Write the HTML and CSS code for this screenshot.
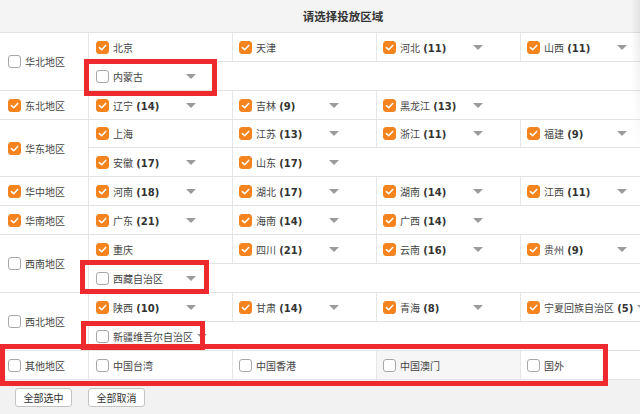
FILE: index.html
```html
<!DOCTYPE html>
<html lang="zh-CN">
<head>
<meta charset="utf-8">
<title>请选择投放区域</title>
<link rel="stylesheet" href="styles.css">
</head>
<body>
<div class="page">
  <div class="header">请选择投放区域</div>
  <div class="table">
    <div class="group">
      <div class="region"><span class="cb"></span>华北地区</div>
      <div class="subs">
        <div class="subrow">
          <div class="cell"><span class="cb on"><svg viewBox="0 0 11 11"><path d="M2.4 5.6 L4.7 7.8 L8.7 3.4"/></svg></span><span class="lbl">北京</span></div>
          <div class="cell"><span class="cb on"><svg viewBox="0 0 11 11"><path d="M2.4 5.6 L4.7 7.8 L8.7 3.4"/></svg></span><span class="lbl">天津</span></div>
          <div class="cell"><span class="cb on"><svg viewBox="0 0 11 11"><path d="M2.4 5.6 L4.7 7.8 L8.7 3.4"/></svg></span><span class="lbl">河北 <b>(11)</b></span><span class="dd"></span></div>
          <div class="cell"><span class="cb on"><svg viewBox="0 0 11 11"><path d="M2.4 5.6 L4.7 7.8 L8.7 3.4"/></svg></span><span class="lbl">山西 <b>(11)</b></span><span class="dd"></span></div>
        </div>
        <div class="subrow">
          <div class="cell"><span class="cb"></span><span class="lbl">内蒙古</span><span class="dd"></span></div>
        </div>
      </div>
    </div>

    <div class="group">
      <div class="region"><span class="cb on"><svg viewBox="0 0 11 11"><path d="M2.4 5.6 L4.7 7.8 L8.7 3.4"/></svg></span>东北地区</div>
      <div class="subs">
        <div class="subrow">
          <div class="cell"><span class="cb on"><svg viewBox="0 0 11 11"><path d="M2.4 5.6 L4.7 7.8 L8.7 3.4"/></svg></span><span class="lbl">辽宁 <b>(14)</b></span><span class="dd"></span></div>
          <div class="cell"><span class="cb on"><svg viewBox="0 0 11 11"><path d="M2.4 5.6 L4.7 7.8 L8.7 3.4"/></svg></span><span class="lbl">吉林 <b>(9)</b></span><span class="dd"></span></div>
          <div class="cell"><span class="cb on"><svg viewBox="0 0 11 11"><path d="M2.4 5.6 L4.7 7.8 L8.7 3.4"/></svg></span><span class="lbl">黑龙江 <b>(13)</b></span><span class="dd"></span></div>
        </div>
      </div>
    </div>

    <div class="group">
      <div class="region"><span class="cb on"><svg viewBox="0 0 11 11"><path d="M2.4 5.6 L4.7 7.8 L8.7 3.4"/></svg></span>华东地区</div>
      <div class="subs">
        <div class="subrow short">
          <div class="cell"><span class="cb on"><svg viewBox="0 0 11 11"><path d="M2.4 5.6 L4.7 7.8 L8.7 3.4"/></svg></span><span class="lbl">上海</span></div>
          <div class="cell"><span class="cb on"><svg viewBox="0 0 11 11"><path d="M2.4 5.6 L4.7 7.8 L8.7 3.4"/></svg></span><span class="lbl">江苏 <b>(13)</b></span><span class="dd"></span></div>
          <div class="cell"><span class="cb on"><svg viewBox="0 0 11 11"><path d="M2.4 5.6 L4.7 7.8 L8.7 3.4"/></svg></span><span class="lbl">浙江 <b>(11)</b></span><span class="dd"></span></div>
          <div class="cell"><span class="cb on"><svg viewBox="0 0 11 11"><path d="M2.4 5.6 L4.7 7.8 L8.7 3.4"/></svg></span><span class="lbl">福建 <b>(9)</b></span><span class="dd"></span></div>
        </div>
        <div class="subrow">
          <div class="cell"><span class="cb on"><svg viewBox="0 0 11 11"><path d="M2.4 5.6 L4.7 7.8 L8.7 3.4"/></svg></span><span class="lbl">安徽 <b>(17)</b></span><span class="dd"></span></div>
          <div class="cell"><span class="cb on"><svg viewBox="0 0 11 11"><path d="M2.4 5.6 L4.7 7.8 L8.7 3.4"/></svg></span><span class="lbl">山东 <b>(17)</b></span><span class="dd"></span></div>
        </div>
      </div>
    </div>

    <div class="group">
      <div class="region"><span class="cb on"><svg viewBox="0 0 11 11"><path d="M2.4 5.6 L4.7 7.8 L8.7 3.4"/></svg></span>华中地区</div>
      <div class="subs">
        <div class="subrow">
          <div class="cell"><span class="cb on"><svg viewBox="0 0 11 11"><path d="M2.4 5.6 L4.7 7.8 L8.7 3.4"/></svg></span><span class="lbl">河南 <b>(18)</b></span><span class="dd"></span></div>
          <div class="cell"><span class="cb on"><svg viewBox="0 0 11 11"><path d="M2.4 5.6 L4.7 7.8 L8.7 3.4"/></svg></span><span class="lbl">湖北 <b>(17)</b></span><span class="dd"></span></div>
          <div class="cell"><span class="cb on"><svg viewBox="0 0 11 11"><path d="M2.4 5.6 L4.7 7.8 L8.7 3.4"/></svg></span><span class="lbl">湖南 <b>(14)</b></span><span class="dd"></span></div>
          <div class="cell"><span class="cb on"><svg viewBox="0 0 11 11"><path d="M2.4 5.6 L4.7 7.8 L8.7 3.4"/></svg></span><span class="lbl">江西 <b>(11)</b></span><span class="dd"></span></div>
        </div>
      </div>
    </div>

    <div class="group">
      <div class="region"><span class="cb on"><svg viewBox="0 0 11 11"><path d="M2.4 5.6 L4.7 7.8 L8.7 3.4"/></svg></span>华南地区</div>
      <div class="subs">
        <div class="subrow">
          <div class="cell"><span class="cb on"><svg viewBox="0 0 11 11"><path d="M2.4 5.6 L4.7 7.8 L8.7 3.4"/></svg></span><span class="lbl">广东 <b>(21)</b></span><span class="dd"></span></div>
          <div class="cell"><span class="cb on"><svg viewBox="0 0 11 11"><path d="M2.4 5.6 L4.7 7.8 L8.7 3.4"/></svg></span><span class="lbl">海南 <b>(14)</b></span><span class="dd"></span></div>
          <div class="cell"><span class="cb on"><svg viewBox="0 0 11 11"><path d="M2.4 5.6 L4.7 7.8 L8.7 3.4"/></svg></span><span class="lbl">广西 <b>(14)</b></span><span class="dd"></span></div>
        </div>
      </div>
    </div>

    <div class="group">
      <div class="region"><span class="cb"></span>西南地区</div>
      <div class="subs">
        <div class="subrow">
          <div class="cell"><span class="cb on"><svg viewBox="0 0 11 11"><path d="M2.4 5.6 L4.7 7.8 L8.7 3.4"/></svg></span><span class="lbl">重庆</span></div>
          <div class="cell"><span class="cb on"><svg viewBox="0 0 11 11"><path d="M2.4 5.6 L4.7 7.8 L8.7 3.4"/></svg></span><span class="lbl">四川 <b>(21)</b></span><span class="dd"></span></div>
          <div class="cell"><span class="cb on"><svg viewBox="0 0 11 11"><path d="M2.4 5.6 L4.7 7.8 L8.7 3.4"/></svg></span><span class="lbl">云南 <b>(16)</b></span><span class="dd"></span></div>
          <div class="cell"><span class="cb on"><svg viewBox="0 0 11 11"><path d="M2.4 5.6 L4.7 7.8 L8.7 3.4"/></svg></span><span class="lbl">贵州 <b>(9)</b></span><span class="dd"></span></div>
        </div>
        <div class="subrow">
          <div class="cell"><span class="cb"></span><span class="lbl">西藏自治区</span><span class="dd"></span></div>
        </div>
      </div>
    </div>

    <div class="group">
      <div class="region"><span class="cb"></span>西北地区</div>
      <div class="subs">
        <div class="subrow">
          <div class="cell"><span class="cb on"><svg viewBox="0 0 11 11"><path d="M2.4 5.6 L4.7 7.8 L8.7 3.4"/></svg></span><span class="lbl">陕西 <b>(10)</b></span><span class="dd"></span></div>
          <div class="cell"><span class="cb on"><svg viewBox="0 0 11 11"><path d="M2.4 5.6 L4.7 7.8 L8.7 3.4"/></svg></span><span class="lbl">甘肃 <b>(14)</b></span><span class="dd"></span></div>
          <div class="cell"><span class="cb on"><svg viewBox="0 0 11 11"><path d="M2.4 5.6 L4.7 7.8 L8.7 3.4"/></svg></span><span class="lbl">青海 <b>(8)</b></span><span class="dd"></span></div>
          <div class="cell"><span class="cb on"><svg viewBox="0 0 11 11"><path d="M2.4 5.6 L4.7 7.8 L8.7 3.4"/></svg></span><span class="lbl">宁夏回族自治区 <b>(5)</b></span><span class="dd"></span></div>
        </div>
        <div class="subrow">
          <div class="cell"><span class="cb"></span><span class="lbl">新疆维吾尔自治区</span><span class="dd"></span></div>
        </div>
      </div>
    </div>

    <div class="group">
      <div class="region"><span class="cb"></span>其他地区</div>
      <div class="subs">
        <div class="subrow">
          <div class="cell"><span class="cb"></span><span class="lbl">中国台湾</span></div>
          <div class="cell"><span class="cb"></span><span class="lbl">中国香港</span></div>
          <div class="cell hover"><span class="cb"></span><span class="lbl">中国澳门</span></div>
          <div class="cell"><span class="cb"></span><span class="lbl">国外</span></div>
        </div>
      </div>
    </div>
  </div>

  <div class="footer">
    <button class="btn">全部选中</button>
    <button class="btn">全部取消</button>
  </div>

  <div class="mark mark-nmg"></div>
  <div class="mark mark-xz"></div>
  <div class="mark mark-xj"></div>
  <div class="mark mark-other"></div>
  <div class="edge"></div>
</div>
</body>
</html>
```

FILE: styles.css
```css
* {
  box-sizing: border-box;
}

body {
  margin: 0;
  width: 640px;
  height: 414px;
  overflow: hidden;
  background: #f2f2f2;
  font-family: "DejaVu Sans", "Noto Sans CJK SC", sans-serif;
  font-size: 10px;
  color: #444;
}

.page {
  position: relative;
  width: 640px;
  height: 414px;
  overflow: hidden;
  background: #f2f2f2;
}

.header {
  height: 33px;
  border-bottom: 1px solid #e2e2e2;
  background: #f4f4f4;
  display: flex;
  align-items: center;
  justify-content: center;
  padding-left: 46px;
  font-family: "Noto Sans CJK SC", sans-serif;
  font-size: 11.5px;
  font-weight: bold;
  color: #333;
}

.table {
  background: #fff;
}

.group {
  display: flex;
  border-bottom: 1px solid #e3e3e3;
}

.region {
  width: 89px;
  flex: none;
  display: flex;
  align-items: center;
  padding-left: 8px;
  border-right: 1px solid #e6e6e6;
  white-space: nowrap;
}

.subs {
  flex: none;
  width: 575px;
}

.subrow {
  display: grid;
  grid-template-columns: 143px 144px 144px 144px;
  height: 29px;
  border-bottom: 1px solid #e3e3e3;
}

.subrow.short {
  height: 28px;
}

.subrow:last-child {
  height: 28px;
  border-bottom: none;
}

.cell {
  display: flex;
  align-items: center;
  padding-left: 7px;
  white-space: nowrap;
}

.cell + .cell {
  border-left: 1px solid #e6e6e6;
  padding-left: 6px;
}

.cell.hover {
  background: #f6f6f6;
}

.cb {
  width: 13px;
  height: 13px;
  flex: none;
  margin-right: 4px;
  border: 1px solid #a8a8a8;
  border-radius: 3px;
  background: #fff;
}

.cb.on {
  background: #f5841f;
  border-color: #f5841f;
}

.cb svg {
  display: block;
  width: 11px;
  height: 11px;
}

.cb svg path {
  fill: none;
  stroke: #fff;
  stroke-width: 1.5;
  stroke-linecap: round;
  stroke-linejoin: round;
}

.lbl {
  min-width: 69px;
}

.lbl b {
  color: #333;
}

.dd {
  flex: none;
  width: 0;
  height: 0;
  margin-left: 4px;
  border-left: 5px solid transparent;
  border-right: 5px solid transparent;
  border-top: 5px solid #9b9b9b;
}

.footer {
  height: 34px;
  display: flex;
  align-items: center;
  gap: 16px;
  padding-left: 15px;
}

.btn {
  width: 57px;
  height: 19px;
  padding: 0;
  border: 1px solid #c4c4c4;
  border-radius: 3px;
  background: #fff;
  font-family: "Noto Sans CJK SC", sans-serif;
  font-size: 10px;
  color: #333;
}

.mark {
  position: absolute;
  border: 5px solid #ee2a2e;
}

.mark-nmg {
  left: 84px;
  top: 59px;
  width: 133px;
  height: 37px;
}

.mark-xz {
  left: 80px;
  top: 260px;
  width: 129px;
  height: 34px;
}

.mark-xj {
  left: 81px;
  top: 321px;
  width: 124px;
  height: 29px;
}

.mark-other {
  left: 0;
  top: 344px;
  width: 608px;
  height: 42px;
}

.edge {
  position: absolute;
  top: 0;
  right: 0;
  width: 9px;
  height: 150px;
  background: linear-gradient(to right, rgba(0, 0, 0, 0), rgba(0, 0, 0, 0.07));
  -webkit-mask-image: linear-gradient(to bottom, #000 25%, transparent);
  mask-image: linear-gradient(to bottom, #000 25%, transparent);
}
```
